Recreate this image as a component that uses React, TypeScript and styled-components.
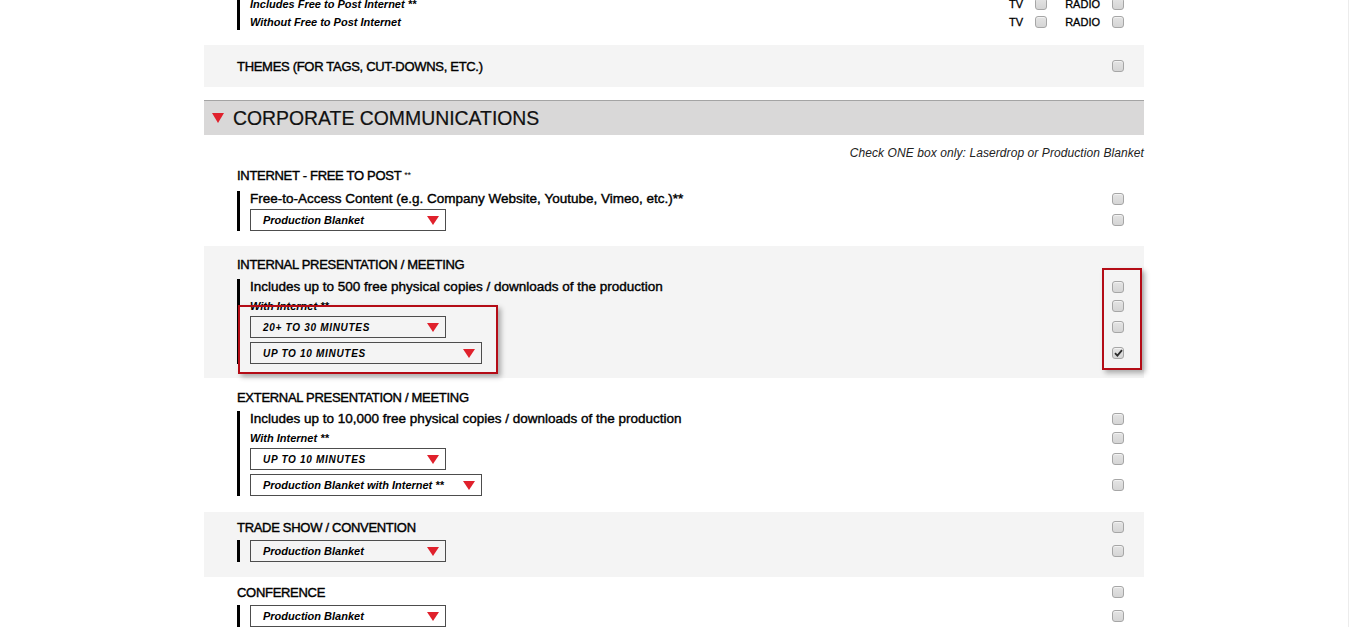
import React from "react";
import styled, { createGlobalStyle } from "styled-components";

const GlobalStyle = createGlobalStyle`
  html, body { margin: 0; padding: 0; overflow: hidden; background: #fff; }
  body { font-family: "Liberation Sans", Arial, sans-serif; color: #000; }
`;

const Page = styled.div`
  width: 1349px;
  height: 627px;
  box-sizing: border-box;
  border-right: 1px solid #ececec;
  overflow: hidden;
`;

const Container = styled.div`
  width: 940px;
  margin-left: 204px;
`;

const Section = styled.div<{ $band?: boolean; $pt?: number; $pb?: number; $mt?: number }>`
  position: relative;
  margin-top: ${p => p.$mt ?? 0}px;
  padding: ${p => p.$pt ?? 0}px 20px ${p => p.$pb ?? 0}px 33px;
  background: ${p => (p.$band ? "#f4f4f4" : "transparent")};
`;

const Row = styled.div<{ $h: number; $mt?: number; $indent?: boolean }>`
  display: flex;
  align-items: center;
  justify-content: space-between;
  height: ${p => p.$h}px;
  margin-top: ${p => p.$mt ?? 0}px;
  padding-left: ${p => (p.$indent ? 10 : 0)}px;
`;

const SubGroup = styled.div<{ $mt?: number }>`
  display: flex;
  flex-direction: column;
  margin-top: ${p => p.$mt ?? 0}px;
  border-left: 3px solid #000;
`;

const Title = styled.span`
  font-size: 13px;
  letter-spacing: -0.3px;
  -webkit-text-stroke: 0.4px #000;
  white-space: nowrap;
`;

const Stars = styled.span`
  font-size: 9px;
  margin-left: 3px;
  vertical-align: 2px;
  -webkit-text-stroke: 0;
`;

const MainText = styled.span`
  font-size: 13.5px;
  -webkit-text-stroke: 0.4px #000;
  white-space: nowrap;
`;

const Note = styled.span`
  font-size: 11px;
  font-weight: bold;
  font-style: italic;
  white-space: nowrap;
`;

const Hint = styled.div`
  margin-top: 11px;
  text-align: right;
  font-size: 12px;
  font-style: italic;
  letter-spacing: 0.08px;
  line-height: 14px;
  color: #222;
`;

const Header = styled.div`
  display: flex;
  align-items: center;
  gap: 9px;
  margin-top: 13px;
  height: 34px;
  padding-left: 8px;
  border-top: 1px solid #a4a4a4;
  background: #d9d8d8;
`;

const HeaderText = styled.h2`
  margin: 0;
  font-size: 19.4px;
  font-weight: normal;
  color: #111;
  -webkit-text-stroke: 0.2px #111;
`;

const DownArrow = styled.span<{ $w?: number; $h?: number }>`
  display: inline-block;
  width: 0;
  height: 0;
  border-left: ${p => (p.$w ?? 12) / 2}px solid transparent;
  border-right: ${p => (p.$w ?? 12) / 2}px solid transparent;
  border-top: ${p => p.$h ?? 9}px solid #e0212c;
`;

const Dropdown = styled.div<{ $w: number }>`
  display: flex;
  align-items: center;
  justify-content: space-between;
  box-sizing: border-box;
  width: ${p => p.$w}px;
  height: 22px;
  padding: 0 6px 0 12px;
  border: 1px solid #4d4d4d;
`;

const DropLabel = styled.span<{ $caps?: boolean }>`
  font-size: ${p => (p.$caps ? 10 : 11)}px;
  font-weight: bold;
  font-style: italic;
  letter-spacing: ${p => (p.$caps ? 0.7 : 0)}px;
  white-space: nowrap;
`;

const Box = styled.span`
  display: inline-flex;
  align-items: center;
  justify-content: center;
  flex: none;
  box-sizing: border-box;
  width: 12px;
  height: 12px;
  border: 1px solid #a6a6a6;
  border-radius: 3px;
  background: linear-gradient(#e4e4e4, #d5d5d5);
  box-shadow: inset 0 1px 0 #f2f2f2;
`;

const Pair = styled.div`
  display: flex;
  align-items: center;
`;

const MediaLabel = styled.span<{ $gap: number }>`
  margin-left: ${p => p.$gap}px;
  margin-right: 12px;
  font-size: 11px;
  -webkit-text-stroke: 0.3px #000;
`;

const Highlight = styled.div<{ $l: number; $t: number; $w: number; $h: number }>`
  position: absolute;
  left: ${p => p.$l}px;
  top: ${p => p.$t}px;
  width: ${p => p.$w}px;
  height: ${p => p.$h}px;
  box-sizing: border-box;
  border: 2px solid #b40c16;
  box-shadow: 3px 3px 5px rgba(0, 0, 0, 0.3);
  pointer-events: none;
`;

const Check: React.FC<{ checked?: boolean }> = ({ checked }) => (
  <Box>
    {checked && (
      <svg width="9" height="8" viewBox="0 0 9 8">
        <path d="M1 4.2 L3.4 6.6 L8 1.2" fill="none" stroke="#2b2b2b" strokeWidth="1.8" />
      </svg>
    )}
  </Box>
);

const Select: React.FC<{ label: string; width?: number; caps?: boolean }> = ({ label, width = 196, caps }) => (
  <Dropdown $w={width}>
    <DropLabel $caps={caps}>{label}</DropLabel>
    <DownArrow />
  </Dropdown>
);

const MediaChecks: React.FC = () => (
  <Pair>
    <MediaLabel $gap={0}>TV</MediaLabel>
    <Check />
    <MediaLabel $gap={18}>RADIO</MediaLabel>
    <Check />
  </Pair>
);

export default function App() {
  return (
    <Page>
      <GlobalStyle />
      <Container>
        <Section $mt={-4} $pb={15}>
          <SubGroup>
            <Row $h={16} $indent>
              <Note>Includes Free to Post Internet **</Note>
              <MediaChecks />
            </Row>
            <Row $h={16} $mt={2} $indent>
              <Note>Without Free to Post Internet</Note>
              <MediaChecks />
            </Row>
          </SubGroup>
        </Section>

        <Section $band $pt={13} $pb={13}>
          <Row $h={16}>
            <Title>THEMES (FOR TAGS, CUT-DOWNS, ETC.)</Title>
            <Check />
          </Row>
        </Section>

        <Header>
          <DownArrow $w={12} $h={10} />
          <HeaderText>CORPORATE COMMUNICATIONS</HeaderText>
        </Header>

        <Hint>Check ONE box only: Laserdrop or Production Blanket</Hint>

        <Section $pt={7} $pb={15}>
          <Row $h={16}>
            <Title>
              INTERNET - FREE TO POST<Stars>**</Stars>
            </Title>
          </Row>
          <SubGroup $mt={8}>
            <Row $h={15} $indent>
              <MainText>Free-to-Access Content (e.g. Company Website, Youtube, Vimeo, etc.)**</MainText>
              <Check />
            </Row>
            <Row $h={22} $mt={3} $indent>
              <Select label="Production Blanket" />
              <Check />
            </Row>
          </SubGroup>
        </Section>

        <Section $band $pt={10} $pb={14}>
          <Row $h={16}>
            <Title>INTERNAL PRESENTATION / MEETING</Title>
          </Row>
          <SubGroup $mt={7}>
            <Row $h={15} $indent>
              <MainText>Includes up to 500 free physical copies / downloads of the production</MainText>
              <Check />
            </Row>
            <Row $h={14} $mt={5} $indent>
              <Note>With Internet **</Note>
              <Check />
            </Row>
            <Row $h={22} $mt={3} $indent>
              <Select label="20+ TO 30 MINUTES" caps />
              <Check />
            </Row>
            <Row $h={22} $mt={4} $indent>
              <Select label="UP TO 10 MINUTES" width={232} caps />
              <Check checked />
            </Row>
          </SubGroup>
          <Highlight $l={34} $t={59} $w={260} $h={69} />
          <Highlight $l={898} $t={22} $w={40} $h={102} />
        </Section>

        <Section $pt={11} $pb={16}>
          <Row $h={16}>
            <Title>EXTERNAL PRESENTATION / MEETING</Title>
          </Row>
          <SubGroup $mt={6}>
            <Row $h={15} $indent>
              <MainText>Includes up to 10,000 free physical copies / downloads of the production</MainText>
              <Check />
            </Row>
            <Row $h={14} $mt={5} $indent>
              <Note>With Internet **</Note>
              <Check />
            </Row>
            <Row $h={22} $mt={3} $indent>
              <Select label="UP TO 10 MINUTES" caps />
              <Check />
            </Row>
            <Row $h={22} $mt={4} $indent>
              <Select label="Production Blanket with Internet **" width={232} />
              <Check />
            </Row>
          </SubGroup>
        </Section>

        <Section $band $pt={7} $pb={15}>
          <Row $h={16}>
            <Title>TRADE SHOW / CONVENTION</Title>
            <Check />
          </Row>
          <SubGroup $mt={5}>
            <Row $h={22} $indent>
              <Select label="Production Blanket" />
              <Check />
            </Row>
          </SubGroup>
        </Section>

        <Section $pt={7}>
          <Row $h={16}>
            <Title>CONFERENCE</Title>
            <Check />
          </Row>
          <SubGroup $mt={5}>
            <Row $h={22} $indent>
              <Select label="Production Blanket" />
              <Check />
            </Row>
          </SubGroup>
        </Section>
      </Container>
    </Page>
  );
}
